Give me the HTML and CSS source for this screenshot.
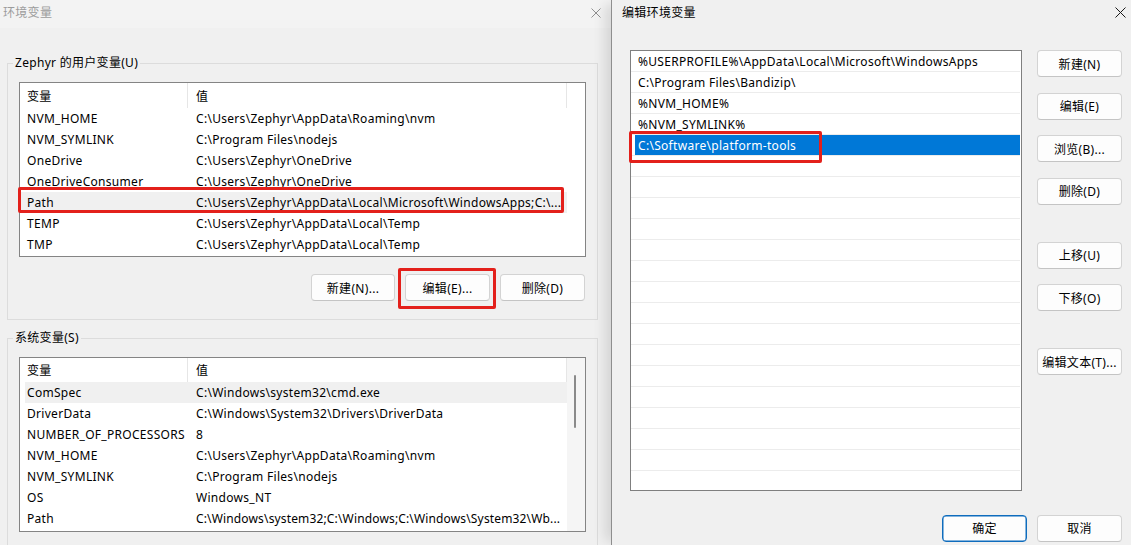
FILE: index.html
```html
<!DOCTYPE html>
<html lang="zh-CN">
<head>
    <meta charset="UTF-8">
    <meta name="viewport" content="width=device-width, initial-scale=1.0">
    <title>环境变量</title>
    <link rel="stylesheet" href="styles.css">
</head>
<body>
<div class="desk">

    <!-- 环境变量 (inactive, behind) -->
    <section class="env-win">
        <header class="titlebar titlebar-inactive">
            <span class="title">环境变量</span>
            <svg class="close close-env" width="10" height="10" viewBox="0 0 10 10"><path d="M0.5 0.5L9.5 9.5M9.5 0.5L0.5 9.5"/></svg>
        </header>

        <fieldset class="group group-user">
            <legend>Zephyr 的用户变量(U)</legend>
            <div class="listview">
                <div class="lv-main">
                    <div class="lv-head"><span class="col-name">变量</span><span class="col-value">值</span></div>
                    <div class="lv-row"><span class="col-name">NVM_HOME</span><span class="col-value">C:\Users\Zephyr\AppData\Roaming\nvm</span></div>
                    <div class="lv-row"><span class="col-name">NVM_SYMLINK</span><span class="col-value">C:\Program Files\nodejs</span></div>
                    <div class="lv-row"><span class="col-name">OneDrive</span><span class="col-value">C:\Users\Zephyr\OneDrive</span></div>
                    <div class="lv-row"><span class="col-name">OneDriveConsumer</span><span class="col-value">C:\Users\Zephyr\OneDrive</span></div>
                    <div class="lv-row is-hot"><span class="col-name">Path</span><span class="col-value">C:\Users\Zephyr\AppData\Local\Microsoft\WindowsApps;C:\...</span></div>
                    <div class="lv-row"><span class="col-name">TEMP</span><span class="col-value">C:\Users\Zephyr\AppData\Local\Temp</span></div>
                    <div class="lv-row"><span class="col-name">TMP</span><span class="col-value">C:\Users\Zephyr\AppData\Local\Temp</span></div>
                </div>
                <div class="lv-gutter"></div>
                <span class="mark mark-path"></span>
            </div>
            <div class="btn-row">
                <button class="btn btn-new">新建(N)...</button>
                <span class="btn-wrap">
                    <button class="btn">编辑(E)...</button>
                    <span class="mark mark-edit"></span>
                </span>
                <button class="btn">删除(D)</button>
            </div>
        </fieldset>

        <fieldset class="group group-system">
            <legend>系统变量(S)</legend>
            <div class="listview">
                <div class="lv-main">
                    <div class="lv-head lv-head-sys"><span class="col-name">变量</span><span class="col-value">值</span></div>
                    <div class="lv-row is-hot is-inset"><span class="col-name">ComSpec</span><span class="col-value">C:\Windows\system32\cmd.exe</span></div>
                    <div class="lv-row"><span class="col-name">DriverData</span><span class="col-value">C:\Windows\System32\Drivers\DriverData</span></div>
                    <div class="lv-row"><span class="col-name">NUMBER_OF_PROCESSORS</span><span class="col-value">8</span></div>
                    <div class="lv-row"><span class="col-name">NVM_HOME</span><span class="col-value">C:\Users\Zephyr\AppData\Roaming\nvm</span></div>
                    <div class="lv-row"><span class="col-name">NVM_SYMLINK</span><span class="col-value">C:\Program Files\nodejs</span></div>
                    <div class="lv-row"><span class="col-name">OS</span><span class="col-value">Windows_NT</span></div>
                    <div class="lv-row"><span class="col-name">Path</span><span class="col-value col-tight">C:\Windows\system32;C:\Windows;C:\Windows\System32\Wb...</span></div>
                </div>
                <div class="lv-gutter lv-scrollbar"><span class="lv-thumb"></span></div>
            </div>
        </fieldset>
    </section>

    <!-- 编辑环境变量 (active) -->
    <section class="edit-win">
        <header class="titlebar">
            <span class="title">编辑环境变量</span>
            <svg class="close" width="11" height="11" viewBox="0 0 11 11"><path d="M0.5 0.5L10.5 10.5M10.5 0.5L0.5 10.5"/></svg>
        </header>

        <div class="edit-body">
            <div class="path-wrap">
                <div class="path-list">
                    <div class="path-row">%USERPROFILE%\AppData\Local\Microsoft\WindowsApps</div>
                    <div class="path-row">C:\Program Files\Bandizip\</div>
                    <div class="path-row">%NVM_HOME%</div>
                    <div class="path-row">%NVM_SYMLINK%</div>
                    <div class="path-row is-selected"><span class="sel">C:\Software\platform-tools</span></div>
                    <div class="path-row"></div>
                    <div class="path-row"></div>
                    <div class="path-row"></div>
                    <div class="path-row"></div>
                    <div class="path-row"></div>
                    <div class="path-row"></div>
                    <div class="path-row"></div>
                    <div class="path-row"></div>
                    <div class="path-row"></div>
                    <div class="path-row"></div>
                    <div class="path-row"></div>
                    <div class="path-row"></div>
                    <div class="path-row"></div>
                    <div class="path-row"></div>
                    <div class="path-row"></div>
                    <div class="path-row"></div>
                    <div class="path-row"></div>
                </div>
                <span class="mark mark-sel"></span>
            </div>

            <div class="side-btns">
                <button class="btn">新建(N)</button>
                <button class="btn">编辑(E)</button>
                <button class="btn">浏览(B)...</button>
                <button class="btn">删除(D)</button>
                <button class="btn btn-gap">上移(U)</button>
                <button class="btn">下移(O)</button>
                <button class="btn btn-gap">编辑文本(T)...</button>
            </div>
        </div>

        <div class="edit-foot">
            <button class="btn btn-default">确定</button>
            <button class="btn">取消</button>
        </div>
    </section>

</div>
</body>
</html>
```

FILE: styles.css
```css
body {
    margin: 0;
    overflow: hidden;
    background-color: #f0f0f0;
    font-family: "Noto Sans", "Noto Sans CJK SC", sans-serif;
    font-size: 12px;
    letter-spacing: 0.3px;
    color: #000;
}
.desk {
    display: flex;
    height: 545px;
    overflow: hidden;
}

/* --- title bars --- */
.titlebar {
    display: flex;
    justify-content: space-between;
    align-items: flex-start;
    box-sizing: border-box;
    height: 24px;
    padding: 5px 5px 0 10px;
    line-height: 16px;
}
.close {
    margin-top: 2px;
    fill: none;
    stroke: #1a1a1a;
    stroke-width: 1;
}
.titlebar-inactive {
    height: 28px;
    padding: 5px 10px 0 3px;
    background-color: #f3f3f3;
    color: #9c9c9c;
}
.close-env {
    margin-top: 3px;
    stroke: #8f8f8f;
}

/* --- left window --- */
.env-win {
    width: 611px;
    flex-shrink: 0;
    background-color: #f0f0f0;
}
.group {
    margin: 27px 13px 0 7px;
    padding: 11px 11px 18px;
    border: 1px solid #dcdcdc;
    min-width: 0;
}
.group-system {
    margin-top: 10px;
}
.group legend {
    margin-left: -6px;
    padding: 0 2px;
    line-height: 16px;
}
.listview {
    position: relative;
    display: flex;
    box-sizing: border-box;
    height: 175px;
    border: 1px solid #848484;
    background-color: #fff;
}
.lv-main {
    flex: 1;
    min-width: 0;
    padding-bottom: 1px;
}
.lv-gutter {
    width: 18px;
    flex-shrink: 0;
}
.lv-scrollbar {
    background-color: #f5f5f5;
    padding-top: 17px;
}
.lv-thumb {
    display: block;
    width: 2px;
    height: 53px;
    margin-left: 7px;
    border-radius: 1px;
    background-color: #8a8a8a;
}
.lv-head, .lv-row {
    display: grid;
    grid-template-columns: 168px 1fr;
    white-space: nowrap;
}
.lv-head {
    height: 25px;
}
.lv-head-sys {
    height: 24px;
}
.lv-head span {
    display: flex;
    align-items: center;
    border-right: 1px solid #e6e6e6;
}
.lv-row {
    height: 21px;
    align-items: center;
}
.col-name {
    padding-left: 7px;
    overflow: hidden;
}
.col-value {
    padding-left: 8px;
    overflow: hidden;
}
.col-tight {
    letter-spacing: 0.15px;
}
.lv-row.is-hot {
    background-color: #f0f0f0;
}
.lv-row.is-inset {
    margin-left: 5px;
    grid-template-columns: 163px 1fr;
}
.lv-row.is-inset .col-name {
    padding-left: 2px;
}

/* --- buttons --- */
.btn {
    box-sizing: border-box;
    width: 85px;
    height: 27px;
    padding: 0;
    font-family: inherit;
    font-size: 12px;
    letter-spacing: 0.3px;
    color: #000;
    background-color: #fdfdfd;
    border: 1px solid #d3d3d3;
    border-bottom-color: #c4c4c4;
    border-radius: 4px;
}
.btn-new {
    width: 84px;
}
.btn-row {
    display: flex;
    justify-content: flex-end;
    gap: 10px;
    margin: 17px 1px 0 0;
}
.btn-wrap {
    position: relative;
    display: flex;
}
.btn-default {
    border-color: #0f6cbd;
    box-shadow: inset 0 0 0 0.5px #0f6cbd;
}

/* --- red callouts --- */
.mark {
    position: absolute;
    box-sizing: border-box;
    border: 3px solid #e3201b;
    border-radius: 2px;
    pointer-events: none;
}
.mark-path {
    left: -2px;
    top: 104px;
    width: 546px;
    height: 26px;
}
.mark-edit {
    left: -7px;
    top: -6px;
    width: 98px;
    height: 41px;
}
.mark-sel {
    left: -1px;
    top: 81px;
    width: 193px;
    height: 32px;
}

/* --- right window --- */
.edit-win {
    flex: 1;
    position: relative;
    z-index: 1;
    display: flex;
    flex-direction: column;
    background-color: #f0f0f0;
    border-left: 1px solid #8e8e8e;
    box-shadow: -10px 0 12px -4px rgba(0, 0, 0, 0.12);
}
.edit-body {
    display: flex;
    padding: 26px 9px 0 18px;
}
.path-wrap {
    position: relative;
    width: 392px;
    flex-shrink: 0;
}
.path-list {
    box-sizing: border-box;
    height: 441px;
    overflow: hidden;
    border: 1px solid #7f7f7f;
    background-color: #fff;
}
.path-row {
    display: flex;
    box-sizing: border-box;
    height: 21px;
    margin-right: 1px;
    padding-left: 7px;
    line-height: 21px;
    border-bottom: 1px solid #ececec;
    white-space: nowrap;
    overflow: hidden;
}
.path-row.is-selected {
    padding-left: 4px;
}
.sel {
    flex: 1;
    height: 20px;
    padding-left: 3px;
    background-color: #0078d7;
    color: #fff;
}
.side-btns {
    display: flex;
    flex-direction: column;
    margin-left: 15px;
}
.side-btns .btn + .btn {
    margin-top: 15.5px;
}
.side-btns .btn.btn-gap {
    margin-top: 37px;
}
.edit-foot {
    display: flex;
    justify-content: flex-end;
    gap: 10px;
    padding: 23.5px 9px 0 0;
}
```
